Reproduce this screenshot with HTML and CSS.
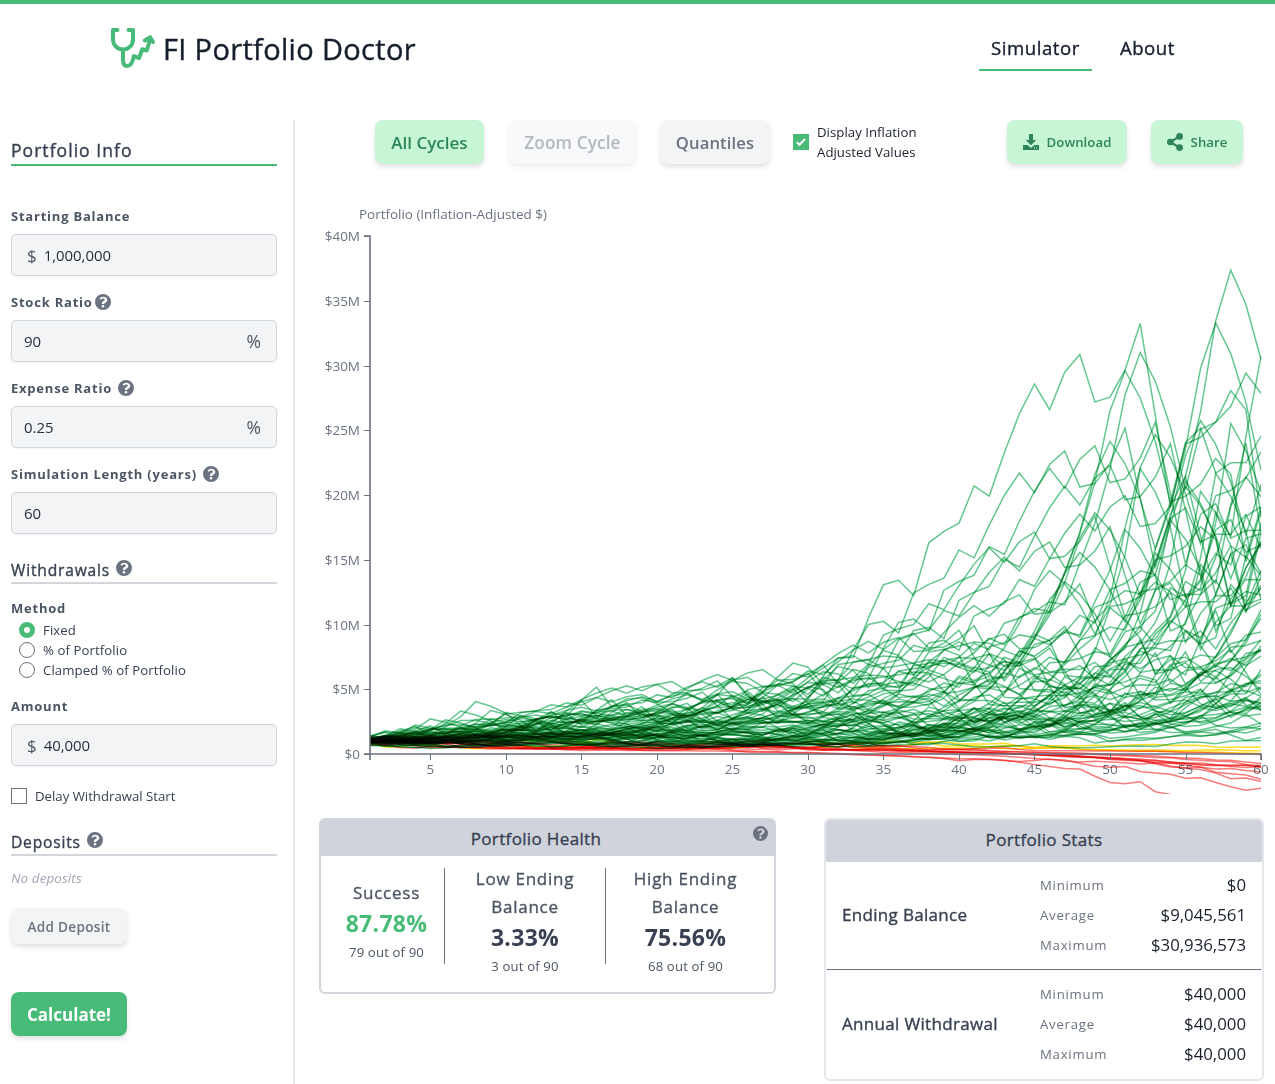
FILE: index.html
```html
<!DOCTYPE html>
<html lang="en">
<head>
<meta charset="utf-8">
<title>FI Portfolio Doctor</title>
<link rel="stylesheet" href="styles.css">
</head>
<body>
<svg class="defs" width="0" height="0">
  <symbol id="help" viewBox="0 0 20 20"><path fill="currentColor" fill-rule="evenodd" d="M20 10a10 10 0 1 1-20 0 10 10 0 0 1 20 0zM10.3 3.3c-2.2 0-3.6.9-4.7 2.6l1.7 1.4c.9-1.1 1.5-1.7 2.8-1.7 1 0 2.2.6 2.2 1.6 0 .7-.6 1.1-1.6 1.7-1.2.6-2.1 1.4-2.1 3.3v.3h2.9c0-1.7 3.8-1.8 3.8-5.3 0-2.2-2.3-3.9-5-3.9zM10 13.6a1.7 1.7 0 1 0 0 3.4 1.7 1.7 0 0 0 0-3.4z"/></symbol>
</svg>
<header class="header">
  <div class="brand">
    <svg class="logo" width="46" height="42" viewBox="110 27 46 42" fill="none" stroke="#48bb78" stroke-width="4" stroke-linecap="round" stroke-linejoin="round"><path d="M117.5 30H113v9.500a10 10 0 0 0 20 0V30h-4.500M123 50v10c0 3.800 1.700 6 4.200 6 3.500 0 5.500-3.200 6.600-10l5.200 2.200 3.300-9 4.500 1.300L150.500 38M144.800 40.500l5.400-3.300 2.800 4.800"/></svg>
    <h1>FI Portfolio Doctor</h1>
  </div>
  <nav class="nav"><a class="active">Simulator</a><a>About</a></nav>
</header>
<div class="page">
  <aside class="sidebar">
    <h2 class="section first">Portfolio Info</h2>
    <label class="label">Starting Balance</label>
    <div class="input money"><i>$</i><span>1,000,000</span></div>
    <label class="label">Stock Ratio<svg class="help tight"><use href="#help"/></svg></label>
    <div class="input"><span>90</span><i class="pct">%</i></div>
    <label class="label">Expense Ratio<svg class="help"><use href="#help"/></svg></label>
    <div class="input"><span>0.25</span><i class="pct">%</i></div>
    <label class="label">Simulation Length (years)<svg class="help"><use href="#help"/></svg></label>
    <div class="input"><span>60</span></div>
    <h2 class="section withdrawals">Withdrawals<svg class="help"><use href="#help"/></svg></h2>
    <label class="label method">Method</label>
    <div class="radio"><b class="on"></b><span>Fixed</span></div>
    <div class="radio"><b></b><span>% of Portfolio</span></div>
    <div class="radio"><b></b><span>Clamped % of Portfolio</span></div>
    <label class="label amount">Amount</label>
    <div class="input money"><i>$</i><span>40,000</span></div>
    <div class="check"><b></b><span>Delay Withdrawal Start</span></div>
    <h2 class="section deposits">Deposits<svg class="help"><use href="#help"/></svg></h2>
    <p class="none">No deposits</p>
    <button class="btn add">Add Deposit</button>
    <button class="btn calc">Calculate!</button>
  </aside>
  <main class="main">
    <div class="toolbar">
      <button class="btn cycles">All Cycles</button>
      <button class="btn zoomc">Zoom Cycle</button>
      <button class="btn quant">Quantiles</button>
      <svg class="tick" width="16" height="16" viewBox="0 0 16 16"><path fill="#48bb78" d="M0 0h16v16H0z"/><path d="M3.800 8.300l2.700 2.500 5.500-5.800" fill="none" stroke="#fff" stroke-width="2"/></svg>
      <div class="inflation"><span>Display Inflation</span><span>Adjusted Values</span></div>
      <button class="btn dl"><svg width="16" height="16" viewBox="0 0 16 16" fill="currentColor"><path d="M6 0h4v6h3.200L8 11.200 2.800 6H6z"/><path fill-rule="evenodd" d="M0 11h4.500L8 14l3.500-3H16v5H0zM11 13.500v1h1v-1zm2 0v1h1v-1z"/></svg><span>Download</span></button>
      <button class="btn share"><svg width="16" height="18" viewBox="0 0 16 18" fill="currentColor"><circle cx="3.300" cy="9" r="3.300"/><circle cx="12.600" cy="3.400" r="3.400"/><circle cx="12.600" cy="14.600" r="3.400"/><path d="M12.600 3.400L3.300 9l9.300 5.600" fill="none" stroke="currentColor" stroke-width="2.200"/></svg><span>Share</span></button>
    </div>
    <svg class="chart" id="chart" width="980" height="614" viewBox="295 190 980 614">
      <text class="title" x="359" y="219" textLength="188">Portfolio (Inflation-Adjusted $)</text>
      <g id="ticks"></g>
      <g id="lines"></g>
      <g id="axes"></g>
    </svg>
    <div class="cards">
      <section class="health">
        <h3>Portfolio Health<svg class="help"><use href="#help"/></svg></h3>
        <div class="cols">
          <div class="col success"><em>Success</em><strong>87.78%</strong><small>79 out of 90</small></div>
          <div class="col low"><em>Low Ending</em><em>Balance</em><strong>3.33%</strong><small>3 out of 90</small></div>
          <div class="col high"><em>High Ending</em><em>Balance</em><strong>75.56%</strong><small>68 out of 90</small></div>
        </div>
      </section>
      <section class="stats">
        <h3>Portfolio Stats</h3>
        <div class="group">
          <h4>Ending Balance</h4>
          <dl><dt>Minimum</dt><dd>$0</dd><dt>Average</dt><dd>$9,045,561</dd><dt>Maximum</dt><dd>$30,936,573</dd></dl>
        </div>
        <div class="group second">
          <h4>Annual Withdrawal</h4>
          <dl><dt>Minimum</dt><dd>$40,000</dd><dt>Average</dt><dd>$40,000</dd><dt>Maximum</dt><dd>$40,000</dd></dl>
        </div>
      </section>
    </div>
  </main>
</div>
<script src="chart.js"></script>
</body>
</html>
```

FILE: styles.css
```css
* { box-sizing: border-box; }
body { margin: 0; border-top: 4px solid #48bb78; height: 1084px; overflow: hidden; background: #fff; color: #1a202c; font-family: "Open Sans", "Noto Sans", sans-serif; font-size: 13.2px; }
h1, h2, h3, h4, p, dl, dd { margin: 0; font-weight: 400; }
h1, h2, h3, h4, .nav a, .col em { -webkit-text-stroke: .35px currentColor; }
.defs { position: absolute; }
.header { height: 116px; padding: 0 88px 0 110px; display: flex; justify-content: space-between; }
.brand { display: flex; padding-top: 23px; }
.brand h1 { font-size: 29px; line-height: 44px; margin-left: 7px; white-space: nowrap; letter-spacing: .34px; color: #161e2e; }
.nav { display: flex; gap: 16px; padding-top: 23px; }
.nav a { height: 44px; line-height: 42px; padding: 0 12px; font-size: 18.6px; letter-spacing: .55px; border-bottom: 2px solid transparent; color: #161e2e; }
.nav .active { border-color: #48bb78; }
.page { display: flex; height: 964px; }
.sidebar { width: 295px; flex: none; border-right: 2px solid #e5e7eb; padding: 0 16px 0 11px; display: flex; flex-direction: column; }
.section { display: flex; font-size: 15.6px; letter-spacing: .8px; color: #374151; line-height: 28px; height: 28px; border-bottom: 2px solid #d2d6dc; white-space: nowrap; }
.first { border-color: #48bb78; margin: 18px 0 38px; font-size: 17.5px; letter-spacing: 1.05px; line-height: 25px; }
.label { height: 24px; margin: 0 0 6px; display: flex; align-items: center; font-size: 13px; font-weight: 700; letter-spacing: .78px; color: #4b5563; white-space: nowrap; }
.help { width: 16px; height: 16px; margin-left: 6px; color: #6b7280; flex: none; }
.tight { margin-left: 2px; }
.input { height: 42px; flex: none; border: 1px solid #d2d6dc; border-radius: 5px; background: #f3f4f6; margin-bottom: 14px; padding: 0 15px 0 12px; display: flex; justify-content: space-between; align-items: center; box-shadow: 0 1px 2px rgba(0,0,0,.06); font-size: 15px; letter-spacing: -.05px; color: #252f3f; }
.input i { font-style: normal; font-size: 17px; color: #4b5563; }
.input .pct { font-size: 17.5px; }
.money { justify-content: flex-start; gap: 7px; padding-left: 15px; }
.withdrawals { margin: 8px 0 12px; }
.section .help { margin: 4px 0 0 6px; }
.method { margin: 0; }
.radio { height: 20px; display: flex; align-items: center; gap: 8px; padding-left: 8px; font-size: 13.2px; letter-spacing: .08px; color: #374151; }
.radio b { width: 16px; height: 16px; border: 1px solid #6b7280; border-radius: 50%; }
.radio .on { border: 5px solid #48bb78; }
.amount { margin-top: 14px; }
.check { margin-top: 8px; display: flex; gap: 8px; align-items: center; height: 16px; font-size: 13.2px; color: #374151; }
.check b { width: 16px; height: 16px; border: 1px solid #6b7280; }
.deposits { margin: 24px 0 12px; }
.none { font-style: italic; font-size: 13.4px; letter-spacing: .12px; line-height: 20px; color: #9fa6b2; }
.btn { border: 0; border-radius: 8px; font: 600 17px "Open Sans", sans-serif; height: 44px; padding: 0; box-shadow: 0 3px 5px rgba(0,0,0,.12); background: #f3f4f6; color: #6b7280; white-space: nowrap; flex: none; }
.add { width: 116px; height: 36px; font-size: 13.6px; font-weight: 600; letter-spacing: .3px; margin-top: 20px; }
.calc { width: 116px; margin-top: 48px; background: #48bb78; color: #fff; font-weight: 700; letter-spacing: 0; }
.main { width: 980px; }
.toolbar { display: flex; padding-left: 80px; height: 70px; }
.cycles, .dl, .share { background: #c6f6d5; color: #2f855a; }
.cycles { width: 109px; }
.zoomc { width: 129px; margin-left: 24px; opacity: .5; }
.zoomc, .quant { letter-spacing: .12px; }
.zoomc { font-size: 17.2px; }
.quant { width: 110px; margin-left: 23px; font-size: 16.6px; }
.tick { margin: 14px 8px 0 23px; }
.inflation { width: 190px; display: flex; flex-direction: column; line-height: 20px; padding-top: 2px; font-size: 13.2px; letter-spacing: .04px; }
.dl, .share { font-size: 13.2px; font-weight: 600; display: flex; align-items: center; justify-content: center; gap: 8px; letter-spacing: .05px; }
.dl { width: 120px; }
.share { width: 92px; margin-left: 24px; }
.chart { display: block; font-size: 13.5px; fill: #6b7280; }
.title { fill: #6b7280; }
.cards { display: flex; align-items: flex-start; margin-top: 14px; padding-left: 24px; }
.health { width: 457px; height: 176px; border: 2px solid #d2d6dc; border-radius: 6px; }
h3 { position: relative; height: 36px; line-height: 37px; text-align: center; background: #d0d3db; font-size: 17px; color: #374151; letter-spacing: .35px; }
.health h3 { padding-right: 23px; }
h3 .help { position: absolute; right: 6px; top: 6px; width: 15px; height: 15px; }
.cols { display: flex; padding-top: 12px; height: 108px; }
.col { display: flex; flex-direction: column; align-items: center; height: 96px; }
.col em { font-style: normal; font-size: 17px; line-height: 28px; letter-spacing: .75px; color: #4b5563; transform: translateY(-3px); }
.col strong { font-size: 23px; line-height: 32px; color: #374151; font-weight: 700; letter-spacing: .3px; transform: translateY(-3px); }
.col small { font-size: 13.2px; line-height: 24px; color: #4b5563; letter-spacing: .12px; transform: translateY(-2px); }
.success { width: 124px; padding: 14px 0 0 8px; border-right: 1px solid #6b7280; }
.success strong { color: #48bb78; }
.low { width: 161px; border-right: 1px solid #6b7280; }
.high { width: 159px; }
.stats { width: 440px; height: 263px; margin-left: 48px; border: 2px solid #e5e7eb; border-radius: 6px; }
.stats h3 { height: 42px; line-height: 40px; border-radius: 4px 4px 0 0; }
.group { display: flex; align-items: center; height: 107px; margin: 0 1px; padding: 0 15px 2px; justify-content: space-between; }
.second { border-top: 1px solid #6b7280; height: 110px; }
h4 { font-size: 17px; color: #374151; letter-spacing: .32px; white-space: nowrap; }
dl { width: 206px; display: grid; grid-template-columns: 1fr auto; line-height: 30px; }
dt { font-size: 13.2px; letter-spacing: .75px; color: #6b7280; }
dd { text-align: right; font-size: 16.8px; letter-spacing: 0; }
#lines { mix-blend-mode: multiply; }
#lines path { fill: none; stroke-width: 1.5; mix-blend-mode: multiply; }
#axes { stroke: #6b7280; fill: none; }
```

FILE: chart.js
```javascript
// Approximate January index price, annual dividend and CPI for every year since 1871.
const price = [4.44,4.86,5.11,4.66,4.54,4.46,3.55,3.25,3.58,5.11,6.19,5.92,5.81,5.18,4.24,5.20,5.58,5.31,5.24,5.38,4.84,5.51,5.61,4.32,4.25,4.27,4.22,4.88,6.08,6.10,7.07,8.12,8.46,6.68,8.43,9.87,9.56,6.85,9.06,10.08,9.27,9.12,9.30,8.37,7.48,9.33,9.57,7.21,7.85,8.83,7.11,7.30,8.90,8.83,10.58,12.65,13.40,17.53,24.86,21.71,15.98,8.30,7.09,10.54,9.26,13.76,17.59,11.31,12.50,12.30,10.55,8.93,10.09,11.85,13.49,18.02,15.21,14.83,15.36,16.88,21.21,24.19,26.18,25.46,35.60,44.15,45.43,41.12,55.62,58.03,59.72,69.07,65.06,76.45,86.12,93.32,84.45,95.04,102.0,90.31,93.49,103.3,118.4,96.11,72.56,96.86,103.8,90.25,99.71,110.9,133,117.3,144.3,166.4,171.6,208.2,264.5,250.5,285.4,339.97,325.5,416.1,435.2,473,465.3,614.4,766.2,963.4,1249,1426,1336,1140,895.8,1133,1181,1279,1424,1379,865.6,1124,1283,1301,1480,1822,2028,1919,2275,2790,2607,3278];
const dividend = [.26,.263,.303,.33,.33,.30,.291,.189,.18,.205,.265,.32,.321,.328,.304,.238,.224,.248,.229,.22,.22,.222,.241,.247,.208,.189,.18,.182,.201,.218,.302,.321,.332,.347,.312,.336,.403,.437,.403,.443,.466,.471,.48,.474,.421,.441,.571,.68,.567,.528,.506,.464,.512,.532,.554,.608,.697,.777,.86,.97,.967,.793,.495,.441,.45,.48,.738,.793,.51,.624,.672,.702,.59,.611,.64,.66,.72,.843,.93,1.15,1.47,1.41,1.41,1.46,1.547,1.67,1.737,1.79,1.753,1.867,1.947,2.027,2.15,2.297,2.51,2.74,2.88,2.94,3.08,3.16,3.13,3.07,3.16,3.4,3.62,3.68,4.1,4.72,5.11,5.7,6.2,6.64,6.88,7.12,7.54,7.94,8.3,8.86,9.81,11.1,12.1,12.2,12.4,12.6,13.2,13.8,14.9,15.5,16.2,16.7,16.3,15.7,16.1,17.4,19.7,22.4,25.1,28,28.4,22.2,23,26.7,31.7,35,39.9,43.6,46,49,54,58.7];
const cpi = [12.46,12.65,12.94,12.37,11.51,10.85,10.94,9.229,8.278,9.99,9.419,10.18,9.99,9.229,8.278,7.992,7.992,8.373,7.992,7.612,7.802,7.326,7.897,6.851,6.565,6.66,6.47,6.66,6.755,7.897,7.707,7.897,8.659,8.278,8.468,8.468,8.849,8.659,8.944,9.895,9.229,9.134,9.8,10,10.1,10.4,11.7,14,16.5,19.3,19,16.9,16.8,17.3,17.3,17.9,17.5,17.3,17.1,17.1,15.9,14.3,12.9,13.2,13.6,13.8,14.1,14.2,14,13.9,14.1,15.7,16.9,17.4,17.8,18.2,21.5,23.7,24,23.5,25.4,26.5,26.6,26.9,26.7,26.8,27.6,28.6,29,29.3,29.8,30,30.4,30.9,31.2,31.8,32.9,34.1,35.6,37.8,39.8,41.1,42.6,46.6,52.1,55.6,58.5,62.5,68.3,77.8,87,94.3,97.8,101.9,105.5,109.6,111.2,115.7,121.1,127.4,134.6,138.1,142.6,146.2,150.3,154.4,159.1,161.6,164.3,168.8,175.1,177.1,181.7,185.2,190.7,198.3,202.4,211.1,211.1,216.7,220.2,226.7,230.3,233.9,233.7,236.9,242.8,247.9,251.7,258];
// Ten-year bond yields at anchor years; years between are interpolated.
const yields = [[1871,5.3],[1880,4],[1890,3.4],[1900,3.15],[1910,3.7],[1920,5],[1922,4.3],[1930,3.3],[1940,2.2],[1950,2.3],[1960,4.7],[1967,4.6],[1970,7.8],[1975,7.5],[1978,8],[1981,12.6],[1982,14.6],[1983,10.5],[1986,9.2],[1990,8.2],[1993,6.6],[1995,7.8],[2000,6.7],[2003,4.05],[2008,3.7],[2012,2],[2019,2.7],[2020,1.8]];
// Hand-set corrections to the growth of single years, for the coarse inputs above.
const correction = { 1965: 1.006, 1966: 1.022, 1967: 1.012, 1968: 1.005, 1969: 1.018, 1971: .985, 1999: 1.004 };
function bondYield(y) {
  const i = Math.min(yields.length - 2, yields.findLastIndex(p => p[0] <= y));
  const [a, b] = [yields[i], yields[i + 1]];
  return (a[1] + (b[1] - a[1]) * (y - a[0]) / (b[0] - a[0])) / 100;
}
const growth = price.slice(0, -1).map((p, i) => {
  const y0 = bondYield(1871 + i), y1 = bondYield(1872 + i);
  const stock = (price[i + 1] + dividend[i]) / p;
  const bond = 1 + y0 - (y1 - y0) * 7.5;
  return (.9 * stock + .1 * bond) * cpi[i] / cpi[i + 1] * .9975 * (correction[1871 + i] || 1);
});
const X = t => 370 + (t - 1) * 15.102;
const Y = v => 754 - v * 12.95;
const cycles = [];
for (let s = 0; s < 90; s++) {
  let v = 1;
  const points = [];
  for (let t = 1; t <= 60; t++) {
    v = (v - .04) * growth[s + t - 1];
    points.push(v);
  }
  cycles.push(points);
}
const ranked = cycles.slice().sort((a, b) => a[59] - b[59]);
const svg = (tag, attrs, parent, text) => {
  const e = document.createElementNS('http://www.w3.org/2000/svg', tag);
  for (const k in attrs) e.setAttribute(k, attrs[k]);
  if (text) e.textContent = text;
  parent.appendChild(e);
};
const chart = document.getElementById('chart');
svg('clipPath', { id: 'plot' }, chart);
svg('rect', { x: 370, y: 230, width: 891.5, height: 564 }, document.getElementById('plot'));
const lines = document.getElementById('lines');
lines.setAttribute('clip-path', 'url(#plot)');
for (const c of cycles) {
  const rank = ranked.indexOf(c);
  const stroke = rank < 11 ? '#f87c7c' : rank < 14 ? '#ffdc26' : '#65c78f';
  svg('path', { d: 'M' + c.map((v, i) => X(i + 1).toFixed(1) + ' ' + Y(v).toFixed(1)).join('L'), stroke }, lines);
}
const ticks = document.getElementById('ticks'), axes = document.getElementById('axes');
for (let v = 0; v <= 40; v += 5) {
  svg('text', { x: 360, y: Y(v) + 5, 'text-anchor': 'end' }, ticks, v ? '$' + v + 'M' : '$0');
  svg('path', { d: `M364 ${Math.round(Y(v)) + .5}h6` }, axes);
}
for (let t = 5; t <= 60; t += 5) {
  svg('text', { x: X(t), y: 774, 'text-anchor': 'middle' }, ticks, String(t));
  svg('path', { d: `M${Math.round(X(t)) + .5} 754v6` }, axes);
}
svg('path', { d: 'M364 236H370V760M364 754H1261V760', 'stroke-width': 1.6 }, axes);
```
